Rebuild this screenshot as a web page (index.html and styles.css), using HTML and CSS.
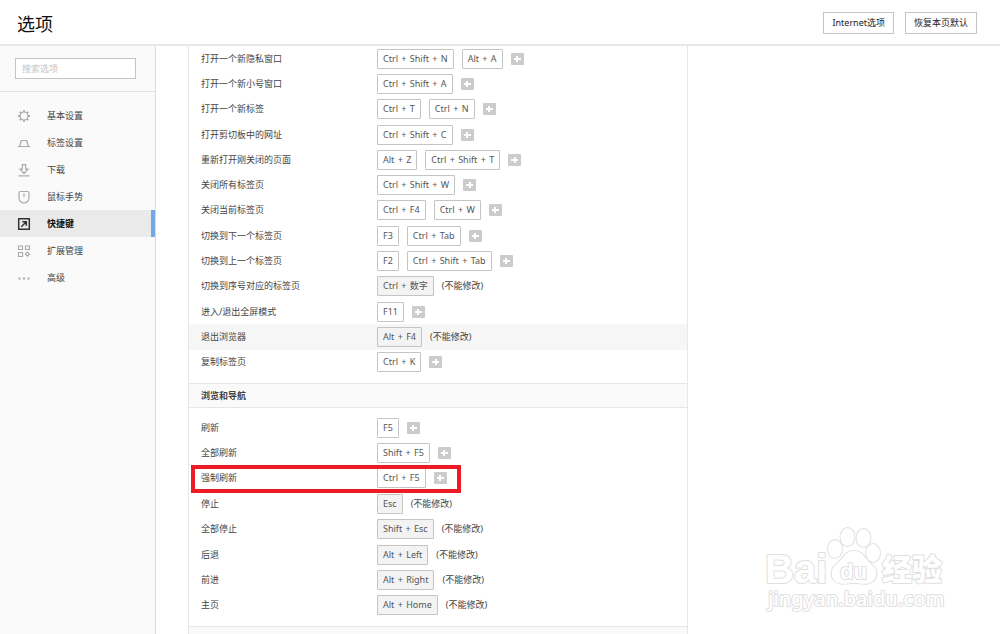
FILE: index.html
```html
<!DOCTYPE html>
<html lang="zh-CN">
<head>
<meta charset="utf-8">
<title>选项</title>
<link rel="stylesheet" href="styles.css">
</head>
<body>
<header class="topbar">
  <h1 class="title">选项</h1>
  <div class="actions">
    <button class="action" type="button">Internet选项</button>
    <button class="action" type="button">恢复本页默认</button>
  </div>
</header>
<div class="layout">
  <aside class="sidebar">
    <div class="search"><input class="search-input" type="text" placeholder="搜索选项" aria-label="搜索选项"></div>
    <nav class="menu">
      <a class="menu-item" href="#basic"><svg class="icon" viewBox="0 0 14 14"><circle cx="7" cy="7" r="4"/><path d="M7 1v2M7 11v2M1 7h2M11 7h2M2.8 2.8l1.3 1.300M9.900 9.900l1.300 1.300M2.800 11.200l1.300-1.300M9.900 4.100l1.300-1.300" stroke-width="1.800"/></svg>基本设置</a>
      <a class="menu-item" href="#tabs"><svg class="icon" viewBox="0 0 14 14"><path d="M.8 10.500h12.400M2.800 10l1.500-5.500h5.400l1.500 5.500"/></svg>标签设置</a>
      <a class="menu-item" href="#download"><svg class="icon" viewBox="0 0 14 14"><path d="M1.500 12.800h11M5.300 1.700h3.400v4.500h2.300L7 10.500 3 6.200h2.300z"/></svg>下载</a>
      <a class="menu-item" href="#gesture"><svg class="icon" viewBox="0 0 14 14"><path d="M3.500 1.500h7q1.500 0 1.500 1.500v5a5 5 0 0 1-10 0V3q0-1.500 1.500-1.500zM7 3.500v3.500"/></svg>鼠标手势</a>
      <a class="menu-item current" href="#keys" aria-current="page"><svg class="icon" viewBox="0 0 14 14"><path d="M1.700 1.700h10.600v10.600H1.700zM4.300 9.700l5-5M5.300 4.700h4v4"/></svg>快捷键</a>
      <a class="menu-item" href="#extensions"><svg class="icon" viewBox="0 0 14 14"><path d="M1.500 2H5.500v3.500H1.500zM8.500 2H12.500v3.500H8.500zM1.500 8.500h4V12.500h-4zM10.500 8.200l2 2-2 2-2-2z"/></svg>扩展管理</a>
      <a class="menu-item" href="#advanced"><svg class="icon" viewBox="0 0 14 14"><path d="M1.500 7.500h2M6 7.500h2M10.500 7.500h2" stroke-width="2"/></svg>高级</a>
    </nav>
  </aside>
  <main class="content">
    <div class="panel">
      <table class="shortcuts long">
        <tr><th scope="row">打开一个新隐私窗口</th><td><div class="keys"><button class="key">Ctrl <span class="plus">+</span> Shift <span class="plus">+</span> N</button><button class="key">Alt <span class="plus">+</span> A</button><button class="add" aria-label="添加"></button></div></td></tr>
        <tr><th scope="row">打开一个新小号窗口</th><td><div class="keys"><button class="key">Ctrl <span class="plus">+</span> Shift <span class="plus">+</span> A</button><button class="add" aria-label="添加"></button></div></td></tr>
        <tr><th scope="row">打开一个新标签</th><td><div class="keys"><button class="key">Ctrl <span class="plus">+</span> T</button><button class="key">Ctrl <span class="plus">+</span> N</button><button class="add" aria-label="添加"></button></div></td></tr>
        <tr><th scope="row">打开剪切板中的网址</th><td><div class="keys"><button class="key">Ctrl <span class="plus">+</span> Shift <span class="plus">+</span> C</button><button class="add" aria-label="添加"></button></div></td></tr>
        <tr><th scope="row">重新打开刚关闭的页面</th><td><div class="keys"><button class="key">Alt <span class="plus">+</span> Z</button><button class="key">Ctrl <span class="plus">+</span> Shift <span class="plus">+</span> T</button><button class="add" aria-label="添加"></button></div></td></tr>
        <tr><th scope="row">关闭所有标签页</th><td><div class="keys"><button class="key">Ctrl <span class="plus">+</span> Shift <span class="plus">+</span> W</button><button class="add" aria-label="添加"></button></div></td></tr>
        <tr><th scope="row">关闭当前标签页</th><td><div class="keys"><button class="key">Ctrl <span class="plus">+</span> F4</button><button class="key">Ctrl <span class="plus">+</span> W</button><button class="add" aria-label="添加"></button></div></td></tr>
        <tr><th scope="row">切换到下一个标签页</th><td><div class="keys"><button class="key">F3</button><button class="key">Ctrl <span class="plus">+</span> Tab</button><button class="add" aria-label="添加"></button></div></td></tr>
        <tr><th scope="row">切换到上一个标签页</th><td><div class="keys"><button class="key">F2</button><button class="key">Ctrl <span class="plus">+</span> Shift <span class="plus">+</span> Tab</button><button class="add" aria-label="添加"></button></div></td></tr>
        <tr><th scope="row">切换到序号对应的标签页</th><td><div class="keys"><button class="key" disabled>Ctrl <span class="plus">+</span> 数字</button><span>(不能修改)</span></div></td></tr>
        <tr><th scope="row">进入/退出全屏模式</th><td><div class="keys"><button class="key">F11</button><button class="add" aria-label="添加"></button></div></td></tr>
        <tr class="hovered"><th scope="row">退出浏览器</th><td><div class="keys"><button class="key" disabled>Alt <span class="plus">+</span> F4</button><span>(不能修改)</span></div></td></tr>
        <tr><th scope="row">复制标签页</th><td><div class="keys"><button class="key">Ctrl <span class="plus">+</span> K</button><button class="add" aria-label="添加"></button></div></td></tr>
      </table>
      <h2 class="section">浏览和导航</h2>
      <table class="shortcuts short">
        <tr><th scope="row">刷新</th><td><div class="keys"><button class="key">F5</button><button class="add" aria-label="添加"></button></div></td></tr>
        <tr><th scope="row">全部刷新</th><td><div class="keys"><button class="key">Shift <span class="plus">+</span> F5</button><button class="add" aria-label="添加"></button></div></td></tr>
        <tr class="marked"><th scope="row">强制刷新</th><td><div class="keys"><button class="key">Ctrl <span class="plus">+</span> F5</button><button class="add" aria-label="添加"></button></div></td></tr>
        <tr><th scope="row">停止</th><td><div class="keys"><button class="key" disabled>Esc</button><span>(不能修改)</span></div></td></tr>
        <tr><th scope="row">全部停止</th><td><div class="keys"><button class="key" disabled>Shift <span class="plus">+</span> Esc</button><span>(不能修改)</span></div></td></tr>
        <tr><th scope="row">后退</th><td><div class="keys"><button class="key" disabled>Alt <span class="plus">+</span> Left</button><span>(不能修改)</span></div></td></tr>
        <tr><th scope="row">前进</th><td><div class="keys"><button class="key" disabled>Alt <span class="plus">+</span> Right</button><span>(不能修改)</span></div></td></tr>
        <tr><th scope="row">主页</th><td><div class="keys"><button class="key" disabled>Alt <span class="plus">+</span> Home</button><span>(不能修改)</span></div></td></tr>
      </table>
      <div class="section"></div>
    </div>
  </main>
</div>
<svg class="watermark" viewBox="0 0 190 96" role="img" aria-label="Baidu 经验">
  <ellipse cx="75" cy="29" rx="7" ry="9"/>
  <ellipse cx="87.500" cy="17" rx="7" ry="9"/>
  <ellipse cx="103.500" cy="18" rx="7" ry="9"/>
  <ellipse cx="113" cy="33" rx="7" ry="9"/>
  <path d="M94 31c-9 0-11 8-17 13-6 4-7 11-3 16 5 6 13 3 20 3s15 3 20-3c4-5 3-12-3-16-6-5-8-13-17-13z"/>
  <text class="wm-brand" x="5" y="63">Bai</text>
  <text class="wm-du" x="80" y="59">du</text>
  <text class="wm-cjk" x="122" y="60">经验</text>
  <text class="wm-url" x="8" y="86">jingyan.baidu.com</text>
</svg>
</body>
</html>
```
FILE: styles.css
```css
*, *::after { box-sizing: border-box; }

body {
  margin: 0;
  height: 100vh;
  overflow: hidden;
  display: flex;
  flex-direction: column;
  background: #fff;
  color: #444;
  font: 9px/12px "Noto Sans", "Noto Sans CJK SC", sans-serif;
}

button, input { font: inherit; color: inherit; }

.topbar {
  flex: none;
  display: flex;
  align-items: center;
  justify-content: space-between;
  height: 46px;
  padding: 0 23px 0 17px;
  border-bottom: 2px solid #e8e8e8;
}

.title {
  margin: 0;
  padding-top: 4px;
  color: #111;
  font-size: 18px;
  font-weight: 400;
  line-height: 24px;
}

.actions { display: flex; gap: 11px; padding-top: 2px; }

.action {
  height: 22px;
  padding: 0 8px;
  border: 1px solid #c4c4c4;
  background: #fff;
  color: #222;
}

.layout { flex: 1; min-height: 0; display: flex; }

.sidebar {
  flex: none;
  width: 156px;
  border-right: 1px solid #dcdcdc;
  background: #fafafa;
}

.search { padding: 12px 19px 12px 15px; border-bottom: 1px solid #e4e4e4; }

.search-input {
  display: block;
  width: 100%;
  height: 21px;
  padding: 0 6px;
  border: 1px solid #c4c4c4;
  background: #fff;
}

.search-input::placeholder { color: #c4c4c4; }

.menu { padding-top: 10px; }

.menu-item {
  display: flex;
  align-items: center;
  gap: 16px;
  height: 27px;
  padding-left: 17px;
  color: #444;
  text-decoration: none;
}

.icon { width: 14px; height: 14px; fill: none; stroke: #aaa; stroke-width: 1.2; }

.current {
  border-right: 4px solid #74a7e8;
  background: #eaeaea;
  color: #111;
  font-weight: 700;
}

.current .icon { stroke: #333; stroke-width: 1.5; }

.content { flex: 1; min-width: 0; overflow: hidden; padding-left: 32px; }

.panel {
  max-width: 500px;
  border: 1px solid #e8e8e8;
  border-width: 0 1px;
}

.shortcuts { width: 100%; border-collapse: collapse; table-layout: fixed; }
.long { height: 329px; }
.short { height: 203px; }

.shortcuts th, .shortcuts td { padding: 0; text-align: left; font-weight: 400; }
.shortcuts th { width: 188px; padding-left: 12px; }

.hovered { background: #f6f6f6; }

.keys { display: flex; align-items: center; gap: 8px; }

.key {
  height: 20px;
  padding: 0 5px;
  border: 1px solid #c4c4c4;
  border-radius: 1px;
  background: #fff;
  color: #555;
  white-space: pre;
}

.key:disabled { background: #f3f3f3; }

.plus { padding: 0 1px; }

.add {
  width: 13px;
  height: 12px;
  padding: 0;
  border: 0;
  border-radius: 1px;
  background:
    linear-gradient(#fff, #fff) center / 7px 2px no-repeat,
    linear-gradient(#fff, #fff) center / 2px 6px no-repeat,
    #ccc;
}

.marked { position: relative; }

.marked::after {
  content: "";
  position: absolute;
  top: -1px;
  left: 2px;
  width: 270px;
  height: 28px;
  border: 4px solid #ed1c24;
}

.section {
  height: 25px;
  margin: 8px 0 7px;
  padding-left: 12px;
  border: 1px solid #e6e6e6;
  border-width: 1px 0;
  background: #fafafa;
  font-size: 9px;
  line-height: 23px;
}

.watermark {
  position: absolute;
  right: 50px;
  bottom: 18px;
  width: 190px;
  height: 96px;
  overflow: visible;
  fill: #fff;
  stroke: #e0e0e0;
  stroke-width: 2;
  stroke-linejoin: round;
  paint-order: stroke;
  pointer-events: none;
}

.wm-brand { font: 700 40px "Liberation Sans", sans-serif; }
.wm-du { font: 700 22px "Liberation Sans", sans-serif; }
.wm-cjk { font: 900 30px "Noto Sans CJK SC", sans-serif; }
.wm-url { font: 500 20px "Noto Sans", sans-serif; }
```
